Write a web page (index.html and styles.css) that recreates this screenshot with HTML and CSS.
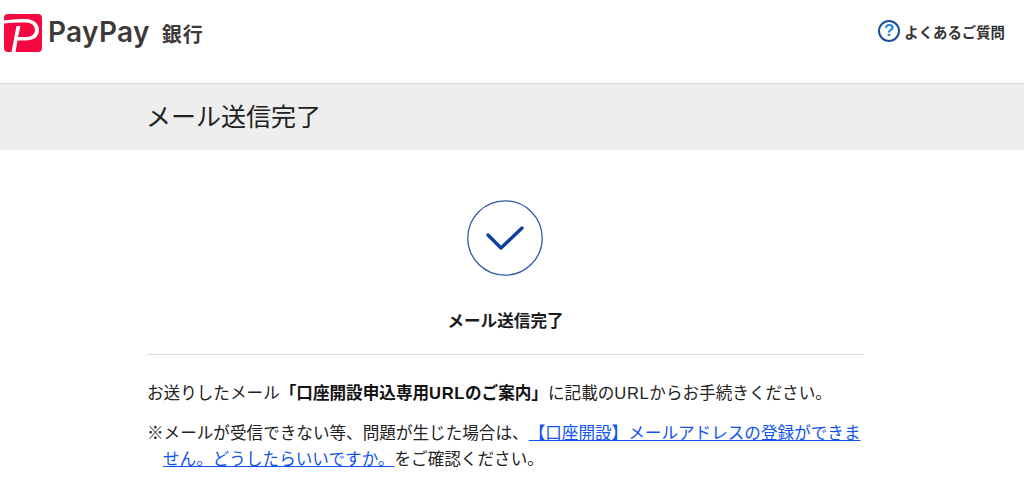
FILE: index.html
```html
<!DOCTYPE html>
<html lang="ja">
<head>
<meta charset="utf-8">
<title>メール送信完了</title>
<link rel="stylesheet" href="styles.css">
</head>
<body>
<header class="site-header">
  <a class="brand" href="#">
    <svg class="brand-mark" viewBox="0 0 38 38" width="38" height="38" aria-hidden="true">
      <rect width="38" height="38" rx="4" fill="#f5083f"/>
      <path d="M0 6.500C8 5 16 5 22 5C30 5 35 10 35 16C35 23 29 26.500 22 26.500H13.500L11.500 38H7.500L12.500 12H16.500L14 23H22C27 23 31 20.500 31 16C31 11.500 27 8.500 22 8.500C14 8.500 7 8.500 0 9.500Z" fill="#fff"/>
    </svg>
    <span class="brand-name">PayPay</span>
    <span class="brand-sub">銀行</span>
  </a>
  <a class="faq" href="#">
    <span class="faq-icon">?</span>
    <span class="faq-label">よくあるご質問</span>
  </a>
</header>
<div class="title-band">
  <h1 class="page-title">メール送信完了</h1>
</div>
<main class="content">
  <div class="check">
    <svg viewBox="0 0 76 76" width="76" height="76" aria-hidden="true">
      <circle cx="38" cy="38" r="37.200" fill="none" stroke="#2f5aa8" stroke-width="1.300"/>
      <path d="M21 35L34 48L55 28" fill="none" stroke="#0f3f9c" stroke-width="3.400" stroke-linecap="round" stroke-linejoin="round"/>
    </svg>
  </div>
  <h2 class="section-title">メール送信完了</h2>
  <p class="lead">お送りしたメール<strong class="em">「口座開設申込専用<span class="latin">URL</span>のご案内」</strong>に記載の<span class="latin">URL</span>からお手続きください。</p>
  <p class="note">※メールが受信できない等、問題が生じた場合は、<a class="link" href="#">【口座開設】メールアドレスの登録ができません。どうしたらいいですか。</a>をご確認ください。</p>
</main>
</body>
</html>
```
FILE: styles.css
```css
* { box-sizing: border-box; }
html, body { margin: 0; padding: 0; }
body {
  height: 478px;
  overflow: hidden;
  background: #fff;
  color: #222;
  font-family: "Liberation Sans", "Noto Sans CJK JP", sans-serif;
  text-spacing-trim: space-all;
}
a { text-decoration: none; color: inherit; }
.site-header {
  height: 84px;
  border-bottom: 1px solid #dcdcdc;
  display: flex;
  justify-content: space-between;
  align-items: flex-start;
  padding: 14px 19px 0 4px;
}
.brand { display: flex; align-items: center; color: #3f3a3a; height: 38px; }
.brand-name {
  margin-left: 6px;
  margin-top: -2px;
  font-family: "Inter", "Liberation Sans", sans-serif;
  font-size: 28px;
  font-weight: 600;
  letter-spacing: 0.3px;
}
.brand-sub {
  margin-left: 12px;
  font-size: 20px;
  font-weight: 700;
  letter-spacing: 1px;
}
.faq { display: flex; align-items: center; gap: 4px; margin-top: 6px; color: #333; }
.faq-icon {
  width: 22px;
  height: 22px;
  border: 2px solid #1d4f96;
  border-radius: 50%;
  color: #1a8be0;
  font-size: 17px;
  font-weight: 700;
  line-height: 18px;
  text-align: center;
}
.faq-label { font-size: 14.400px; font-weight: 700; }
.title-band {
  height: 66px;
  padding: 0 0 5px 146px;
  background: #eeeeee;
  display: flex;
  align-items: center;
}
.page-title { margin: 0; font-size: 25px; font-weight: 400; color: #222; }
.content { width: 717px; margin-left: 147px; padding-top: 50px; }
.check { display: flex; justify-content: center; padding-right: 1px; }
.check svg { display: block; }
.section-title {
  margin: 33px 0 0;
  padding-bottom: 20px;
  border-bottom: 1px solid #dcdcdc;
  font-size: 16.600px;
  line-height: 25px;
  font-weight: 700;
  text-align: center;
  color: #1a1a1a;
}
.lead { margin: 26px 0 0; font-size: 16.600px; line-height: 26px; }
.em { font-weight: 700; color: #111; }
.latin { letter-spacing: 0.6px; }
.note {
  margin: 14px 0 0;
  padding-left: 16px;
  text-indent: -16px;
  font-size: 16.600px;
  line-height: 26px;
}
.link { color: #1155ee; text-decoration: underline; }
```
